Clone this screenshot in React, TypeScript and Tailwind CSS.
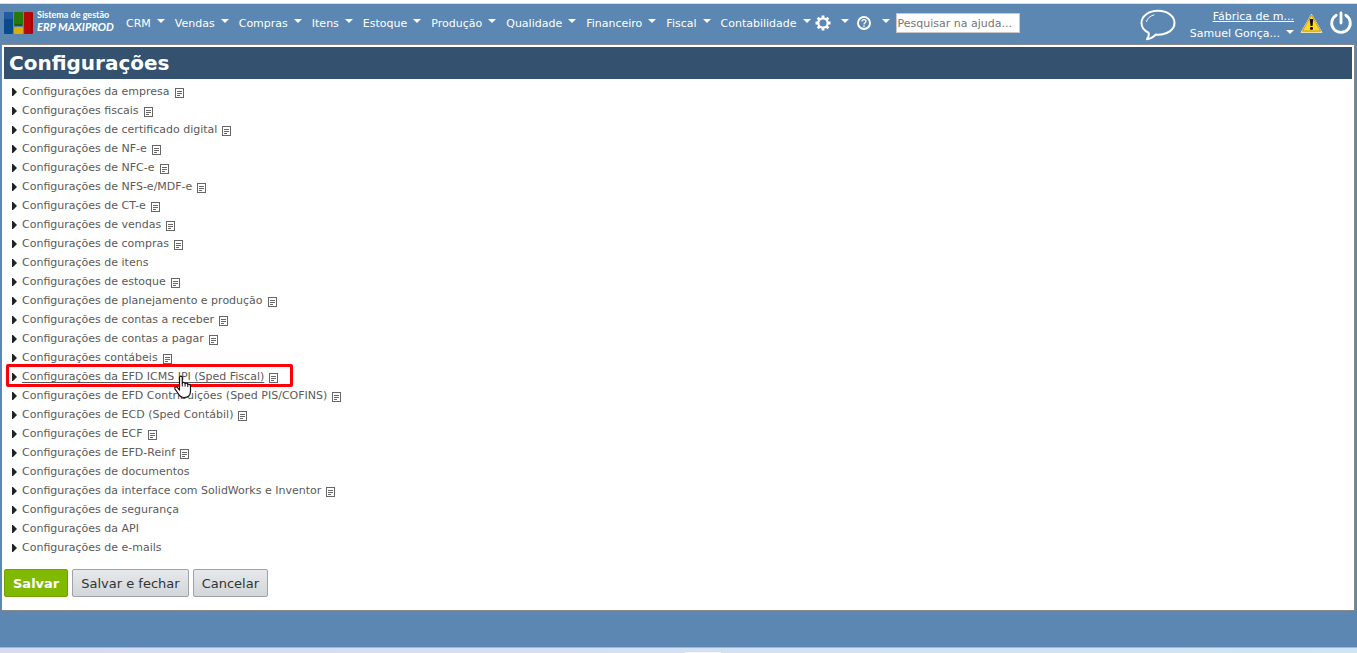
import React from "react";

const menus = ["CRM", "Vendas", "Compras", "Itens", "Estoque", "Produção", "Qualidade", "Financeiro", "Fiscal", "Contabilidade"];

type Section = { label: string; note?: boolean; active?: boolean };

const sections: Section[] = [
  { label: "Configurações da empresa", note: true },
  { label: "Configurações fiscais", note: true },
  { label: "Configurações de certificado digital", note: true },
  { label: "Configurações de NF-e", note: true },
  { label: "Configurações de NFC-e", note: true },
  { label: "Configurações de NFS-e/MDF-e", note: true },
  { label: "Configurações de CT-e", note: true },
  { label: "Configurações de vendas", note: true },
  { label: "Configurações de compras", note: true },
  { label: "Configurações de itens" },
  { label: "Configurações de estoque", note: true },
  { label: "Configurações de planejamento e produção", note: true },
  { label: "Configurações de contas a receber", note: true },
  { label: "Configurações de contas a pagar", note: true },
  { label: "Configurações contábeis", note: true },
  { label: "Configurações da EFD ICMS IPI (Sped Fiscal)", note: true, active: true },
  { label: "Configurações de EFD Contribuições (Sped PIS/COFINS)", note: true },
  { label: "Configurações de ECD (Sped Contábil)", note: true },
  { label: "Configurações de ECF", note: true },
  { label: "Configurações de EFD-Reinf", note: true },
  { label: "Configurações de documentos" },
  { label: "Configurações da interface com SolidWorks e Inventor", note: true },
  { label: "Configurações de segurança" },
  { label: "Configurações da API" },
  { label: "Configurações de e-mails" },
];

function Caret() {
  return (
    <svg className="mb-1 h-1 w-2 shrink-0" viewBox="0 0 8 4" fill="#fff" aria-hidden="true">
      <path d="M0 0h8L4 4z" />
    </svg>
  );
}

function Logo() {
  return (
    <svg className="h-[22px] w-[29px] shrink-0" viewBox="0 0 29 22" aria-hidden="true">
      <rect width="9" height="22" rx="1" fill="#084c8c" />
      <rect width="9" height="7" rx="1" fill="#2459a6" />
      <rect x="10" width="9" height="14" rx="1" fill="#267a0c" />
      <path d="M11 13h7" stroke="#173f16" />
      <rect x="10" y="15" width="9" height="7" rx="1" fill="#d9ad0b" />
      <rect x="20" width="9" height="22" rx="1" fill="#b90808" />
      <path d="M28 1v20" stroke="#900" />
    </svg>
  );
}

function Gear() {
  return (
    <svg className="h-4 w-4" viewBox="0 0 16 16" fill="none" stroke="#fff" aria-hidden="true">
      <circle cx="8" cy="8" r="4.700" strokeWidth="2.200" />
      <path
        d="M8 .5v2.500M8 13v2.500M.5 8H3M13 8h2.500M2.700 2.700l1.700 1.700M11.600 11.600l1.700 1.700M2.700 13.300l1.700-1.700M11.600 4.400l1.700-1.700"
        strokeWidth="2.800"
      />
    </svg>
  );
}

function Help() {
  return (
    <svg className="h-[14px] w-[14px]" viewBox="0 0 14 14" fill="none" stroke="#fff" aria-hidden="true">
      <circle cx="7" cy="7" r="6" strokeWidth="1.900" />
      <path d="M5 5.500C5 3 9 3 9 5.300 9 6.700 7 6.700 7 8.500" strokeWidth="1.300" />
      <path d="M7 9.600v1.400" strokeWidth="1.400" />
    </svg>
  );
}

function Chat() {
  return (
    <svg className="h-8 w-9" viewBox="0 0 36 32" fill="none" stroke="#fff" strokeLinecap="round" strokeLinejoin="round" aria-hidden="true">
      <path
        d="M8.500 23.700C4.200 21.600 1.500 18 1.500 14 1.500 7.100 8.800 1.800 18 1.800S34.500 7.100 34.500 14c0 6.800-7.300 11.700-16.500 11.700l-2.300-.1C13.500 28.200 10.500 29.700 7 30.200c1.700-2.400 2.300-4.300 1.500-6.500z"
        strokeWidth="2"
      />
      <path d="M6.500 12.500c.8-3.200 3.600-5.700 7.500-6.600" strokeWidth="1" />
    </svg>
  );
}

function Warning() {
  return (
    <svg className="h-[21px] w-[23px]" viewBox="0 0 23 21" aria-hidden="true">
      <path d="M11.500 1.200 22 19.500H1z" fill="#f6cf2b" stroke="#e9e3b4" strokeLinejoin="round" />
      <path d="M11.500 2 20.500 18H2.500z" fill="#ffd91c" stroke="#b98a3a" strokeWidth=".8" strokeLinejoin="round" />
      <path d="M9.700 6h3.600l-.8 7h-2z" fill="#111" />
      <rect x="10" y="14" width="3" height="2.700" rx="1" fill="#111" />
    </svg>
  );
}

function Power() {
  return (
    <svg className="h-6 w-6" viewBox="0 0 24 24" fill="none" stroke="#fff" strokeWidth="2.800" strokeLinecap="round" aria-hidden="true">
      <path d="M12 2v10" />
      <path d="M7.200 4.200a9.300 9.300 0 1 0 9.600 0" />
    </svg>
  );
}

function Note() {
  return (
    <svg className="h-[10px] w-[9px]" viewBox="0 0 9 10" fill="none" stroke="#666" shapeRendering="crispEdges" aria-hidden="true">
      <rect x=".5" y=".5" width="8" height="9" />
      <path d="M2 3.500h5M2 5.500h5M2 7.500h3" />
    </svg>
  );
}

function Pointer() {
  return (
    <svg className="pointer-events-none absolute top-2 left-[161px] z-10 h-6 w-[19px]" viewBox="0 0 19 24" aria-hidden="true">
      <path
        d="M6.500 15V2.800C6.500.6 9.300.6 9.300 2.800V8c.9-1 2.600-.6 2.800.6 1-.8 2.500-.3 2.700.9 1.300-.7 2.700.1 2.700 1.600V16c0 4-2.500 6.500-6.300 6.500-3.300 0-5-1.500-6.400-4.500L1.900 13.800c-.8-1.700 1.200-2.700 2.400-1.400z"
        fill="#fff"
        stroke="#111"
        strokeWidth="1.200"
        strokeLinejoin="round"
      />
      <path d="M9.300 8v3.500M12.100 8.600v3M14.800 9.500v2.500" stroke="#111" fill="none" />
    </svg>
  );
}

function SectionRow({ label, note, active }: Section) {
  return (
    <li className="relative flex h-[19px] items-center pl-2">
      {active && <span className="pointer-events-none absolute -top-[3px] left-[2px] h-[23px] w-[287px] rounded-[2px] border-3 border-[#fb0008]" />}
      <div className={active ? "relative z-10 flex items-center" : "flex items-center"}>
        <button type="button" className="flex items-center gap-[5px]">
          <svg className="h-2 w-[5px]" viewBox="0 0 5 8" fill="#222" aria-hidden="true">
            <path d="M0 0h1l4 4-4 4H0z" />
          </svg>
          <span className={active ? "underline underline-offset-2" : ""}>{label}</span>
        </button>
        {active && <Pointer />}
        {note && (
          <a href="#" aria-label={"Notas: " + label} className="ml-[5px] pt-[3px]">
            <Note />
          </a>
        )}
      </div>
    </li>
  );
}

export default function App() {
  return (
    <div className="flex min-h-screen flex-col bg-[#5b87b2] font-['DejaVu_Sans',Verdana,sans-serif] text-[11px] leading-[19px] text-[#5a5a5a]">
      <div className="h-1 border-b border-[#d5dde6] bg-white" />
      <header className="flex h-10 items-center justify-between pr-1 pb-[2px] pl-1 text-white">
        <div className="flex items-center">
          <a href="#" className="flex items-center gap-1 font-['Lato',sans-serif] font-bold">
            <Logo />
            <span className="flex w-[85px] flex-col whitespace-nowrap pb-1">
              <span className="text-[9px] leading-3">Sistema de gestão</span>
              <span className="text-[11px] leading-3 italic">ERP MAXIPROD</span>
            </span>
          </a>
          <nav className="ml-1 flex items-center gap-[10px]">
            {menus.map((m) => (
              <button key={m} type="button" className="flex items-center gap-[6px]">
                {m}
                <Caret />
              </button>
            ))}
          </nav>
          <button type="button" aria-label="Configurações" className="ml-1 flex items-center gap-[10px]">
            <Gear />
            <Caret />
          </button>
          <button type="button" aria-label="Ajuda" className="ml-2 flex items-center gap-[11px]">
            <Help />
            <Caret />
          </button>
          <input
            type="text"
            aria-label="Pesquisar na ajuda"
            placeholder="Pesquisar na ajuda..."
            className="ml-[6px] h-5 w-[124px] border border-[#c8c8c8] bg-white px-px text-[11px] text-[#333] placeholder:text-[#757575]"
          />
        </div>
        <div className="flex items-center">
          <button type="button" aria-label="Mensagens" className="pt-1">
            <Chat />
          </button>
          <div className="mt-1 ml-[14px] flex flex-col text-right leading-[17px]">
            <a href="#" className="pl-5 underline">Fábrica de m...</a>
            <button type="button" className="flex items-center justify-end gap-[6px]">
              Samuel Gonça...
              <Caret />
            </button>
          </div>
          <button type="button" aria-label="Avisos" className="ml-[6px]">
            <Warning />
          </button>
          <button type="button" aria-label="Sair" className="ml-[6px]">
            <Power />
          </button>
        </div>
      </header>
      <main className="mr-[2px] ml-[2px] border-t border-r border-b border-[#888] bg-white px-[2px] pt-[2px] pb-[13px]">
        <h1 className="bg-[#34526f] px-[5px] text-xl leading-8 font-bold text-white">Configurações</h1>
        <ul className="pt-[3px]">
          {sections.map((s) => (
            <SectionRow key={s.label} {...s} />
          ))}
        </ul>
        <div className="mt-3 flex gap-1 text-[13px] text-[#333]">
          <button type="button" className="h-7 rounded-[2px] border border-[#71a300] bg-[#80b900] px-2 font-bold text-white">Salvar</button>
          <button type="button" className="h-7 rounded-[2px] border border-[#9ea3a8] bg-linear-to-b from-[#e7e9eb] to-[#d2d6da] px-2">Salvar e fechar</button>
          <button type="button" className="h-7 rounded-[2px] border border-[#9ea3a8] bg-linear-to-b from-[#e7e9eb] to-[#d2d6da] px-2">Cancelar</button>
        </div>
      </main>
      <footer className="mt-auto flex h-[6px] justify-center border-t border-[#a3b8cf] bg-linear-to-r from-[#d6dcf0] to-[#cfe5f3] pt-1 pl-12">
        <span className="h-px w-9 bg-[#f2f6f8]" />
      </footer>
    </div>
  );
}
